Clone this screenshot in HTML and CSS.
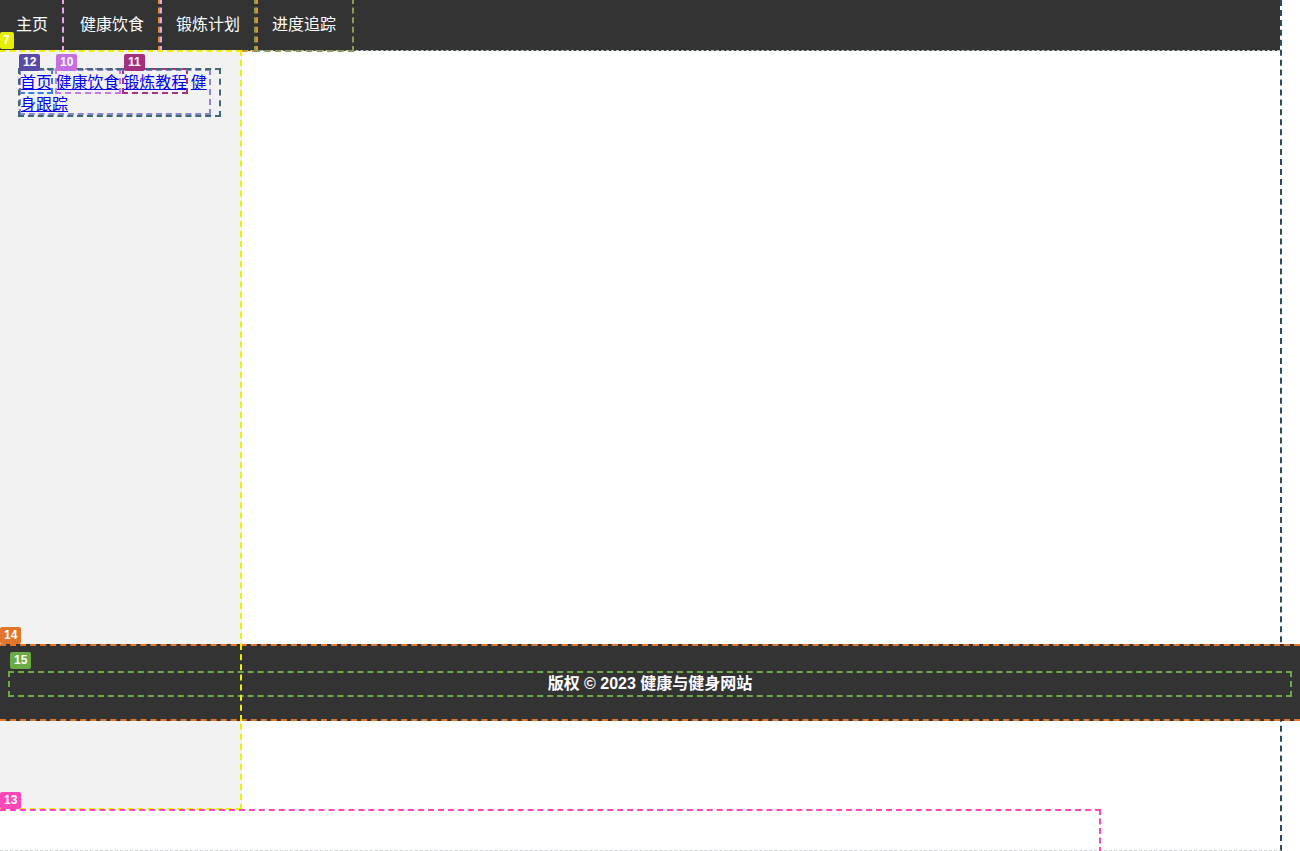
FILE: index.html
```html
<!DOCTYPE html>
<html lang="zh">
<head>
<meta charset="utf-8">
<title>健康与健身网站</title>
<link rel="stylesheet" href="styles.css">
</head>
<body>
<div class="page">
  <header class="topbar">
    <a class="nav-item" href="#">主页</a>
    <a class="nav-item nav-lilac" href="#">健康饮食</a>
    <a class="nav-item nav-orange" href="#">锻炼计划</a>
    <a class="nav-item nav-olive" href="#">进度追踪</a>
  </header>
  <div class="content-row">
    <aside class="sidebar">
      <span class="tag tag-yellow tag-7">7</span>
      <span class="tag tag-indigo tag-12">12</span>
      <span class="tag tag-violet tag-10">10</span>
      <span class="tag tag-magenta tag-11">11</span>
      <div class="menu">
        <p class="menu-list"><a class="link link-blue" href="#">首页</a> <a class="link link-violet" href="#">健康饮食</a> <a class="link link-magenta" href="#">锻炼教程</a> <a class="link" href="#">健身跟踪</a></p>
      </div>
    </aside>
    <main class="main"></main>
  </div>
  <section class="block13">
    <span class="tag tag-pink tag-13">13</span>
  </section>
</div>
<footer class="footer">
  <span class="tag tag-orange tag-14">14</span>
  <span class="tag tag-green tag-15">15</span>
  <p class="copyright">版权 © 2023 健康与健身网站</p>
</footer>
</body>
</html>
```

FILE: styles.css
```css
html, body {
  margin: 0;
  padding: 0;
  height: 851px;
  overflow: hidden;
  background: #ffffff;
  font-family: "Liberation Sans", "Noto Sans CJK SC", sans-serif;
  font-size: 16px;
}

.page {
  position: relative;
  width: 1282px;
  height: 851px;
  box-sizing: border-box;
  border-right: 2px dashed #2b4a6b;
  border-bottom: 1px dashed #c9d3d8;
}

.topbar {
  display: flex;
  height: 50px;
  background: #333333;
  border-bottom: 1px dashed #b3cacd;
}

.nav-item {
  display: block;
  padding: 0 16px;
  line-height: 50px;
  height: 50px;
  color: #ffffff;
  text-decoration: none;
  font-size: 16px;
  box-sizing: border-box;
}

.nav-lilac { outline: 2px dashed #e2a8e8; outline-offset: 0; }
.nav-orange { outline: 2px dashed #d8942a; outline-offset: 0; }
.nav-olive { outline: 2px dashed #8a9a55; outline-offset: 0; }

.content-row {
  display: flex;
  height: 758px;
  margin-top: -1px;
}

.sidebar {
  position: relative;
  width: 242px;
  height: 760px;
  box-sizing: border-box;
  background: #f2f2f2;
  padding: 18px 0 0 18px;
  z-index: 3;
}

.sidebar::after {
  content: "";
  position: absolute;
  inset: 0;
  border: 2px dashed #eef000;
  border-left: none;
  pointer-events: none;
  z-index: 20;
}

.main {
  flex: 1;
}

.menu {
  width: 203px;
  box-sizing: border-box;
  padding: 2px 11px 3px 2px;
  outline: 2px dashed #3c6a72;
  outline-offset: -2px;
}

.menu-list {
  margin: 0;
  width: 190px;
  line-height: 22px;
  outline: 2px dashed #8a84d8;
  outline-offset: -1px;
  font-family: "Noto Sans CJK SC", sans-serif;
}

.link {
  color: #0000ee;
  text-decoration: underline;
}

.link-blue { outline: 2px dashed #2d82e6; outline-offset: -1px; }
.link-violet { outline: 2px dashed #c77ae6; outline-offset: -1px; }
.link-magenta { outline: 2px dashed #a7337f; outline-offset: -1px; }

.block13 {
  position: relative;
  width: 1101px;
  height: 44px;
  margin-top: 1px;
  box-sizing: border-box;
  border-top: 2px dashed #ff48b8;
  border-right: 2px dashed #ff48b8;
  border-bottom: 1px dashed #f0b0dc;
  z-index: 4;
}

.footer {
  position: absolute;
  top: 644px;
  left: 0;
  width: 1300px;
  height: 77px;
  box-sizing: border-box;
  padding: 25px 8px;
  background: #333333;
  border-top: 2px dashed #e0772a;
  border-bottom: 2px dashed #e0772a;
  z-index: 5;
}

.footer::after {
  content: "";
  position: absolute;
  top: -2px;
  bottom: -2px;
  left: 240px;
  border-left: 2px dashed #eef000;
}

.copyright {
  margin: 0;
  height: 26px;
  box-sizing: border-box;
  border: 2px dashed #6aab45;
  color: #ffffff;
  font-weight: bold;
  text-align: center;
  line-height: 22px;
  font-size: 16px;
}

.tag {
  position: absolute;
  display: block;
  height: 17px;
  padding: 0 4px;
  border-radius: 2px;
  color: #ffffff;
  font-family: "Liberation Sans", sans-serif;
  font-weight: bold;
  font-size: 12px;
  line-height: 17px;
  z-index: 30;
}

.tag-yellow { background: #e6ef00; }
.tag-indigo { background: #5a4aa8; }
.tag-violet { background: #c46fe2; }
.tag-magenta { background: #a2307f; }
.tag-orange { background: #e0772a; }
.tag-green { background: #6aab45; }
.tag-pink { background: #ff48b8; }

.tag-7 { left: 0; top: -18px; padding: 0 4px 0 3px; }
.tag-12 { left: 19px; top: 4px; }
.tag-10 { left: 56px; top: 4px; }
.tag-11 { left: 124px; top: 4px; }
.tag-14 { left: 0; top: -19px; }
.tag-15 { left: 10px; top: 6px; }
.tag-13 { left: 0; top: -19px; }
```
